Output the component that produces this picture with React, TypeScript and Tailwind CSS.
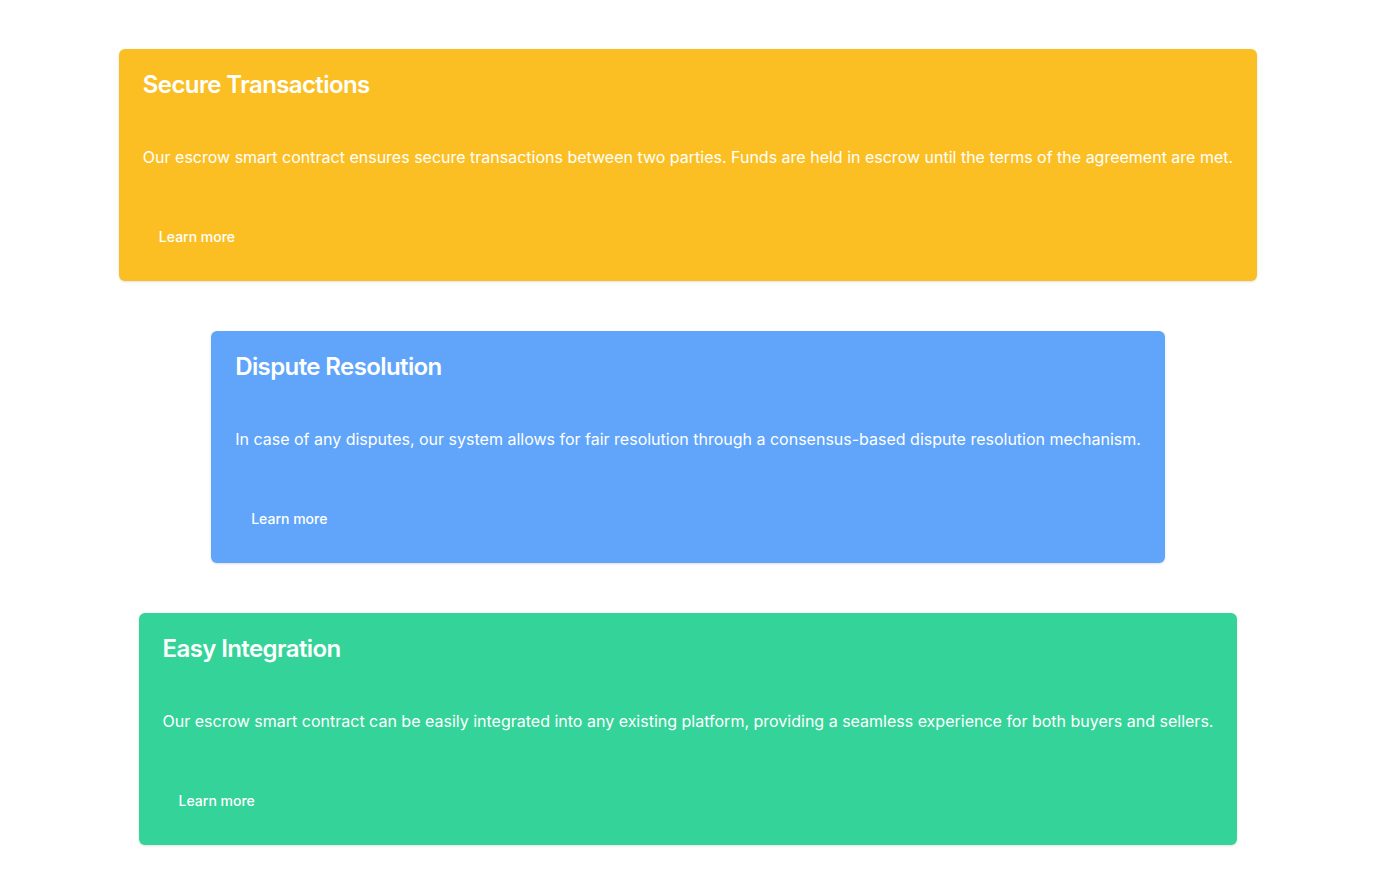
import React from 'react';

const features = [
    {
        title: 'Secure Transactions',
        text: 'Our escrow smart contract ensures secure transactions between two parties. Funds are held in escrow until the terms of the agreement are met.',
        color: 'bg-[#fbbf24]',
    },
    {
        title: 'Dispute Resolution',
        text: 'In case of any disputes, our system allows for fair resolution through a consensus-based dispute resolution mechanism.',
        color: 'bg-[#60a5fa]',
    },
    {
        title: 'Easy Integration',
        text: 'Our escrow smart contract can be easily integrated into any existing platform, providing a seamless experience for both buyers and sellers.',
        color: 'bg-[#34d399]',
    },
];

const FeatureCard = ({ title, text, color }: { title: string; text: string; color: string }) => (
    <div className={`flex flex-col items-start w-fit h-[232px] px-6 pt-5 rounded-md shadow-sm text-white ${color}`}>
        <h2 className="text-2xl font-semibold tracking-tight">{title}</h2>
        {/* description */}
        <p className="mt-11 text-base">{text}</p>
        <button type="button" className="mt-[50px] px-4 py-2 text-sm font-medium rounded-md">
            Learn more
        </button>
    </div>
);

const App = () => {
    return (
        <div
            className="min-h-screen bg-white flex flex-col items-center gap-[50px] pt-[49px] pb-12"
            style={{ fontFamily: 'Inter, "Noto Sans", sans-serif' }}
        >
            {features.map((f) => (
                <FeatureCard key={f.title} {...f} />
            ))}
        </div>
    );
};

export default App;
